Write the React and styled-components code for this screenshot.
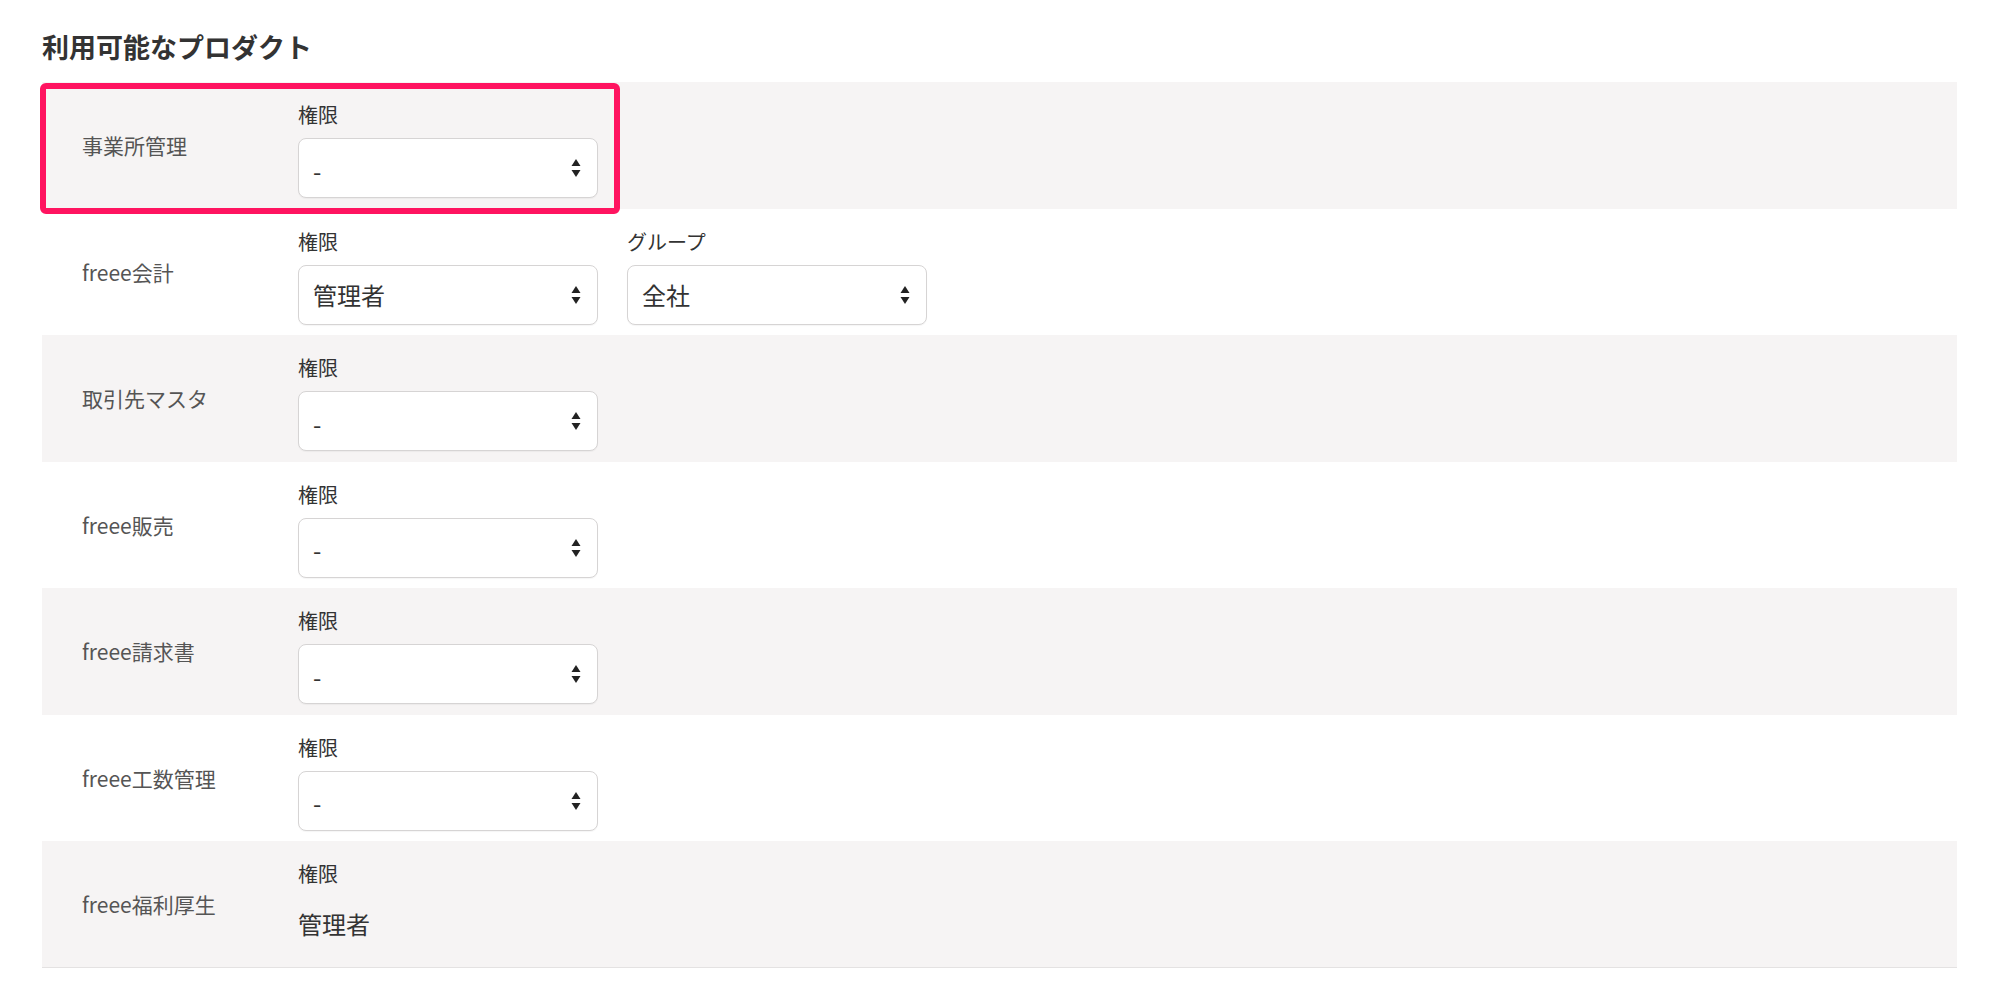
import * as React from 'react';
import styled, { createGlobalStyle } from 'styled-components';

const GlobalStyle = createGlobalStyle`
  html, body {
    margin: 0;
    padding: 0;
    background: #fff;
  }
  body {
    font-family: "Noto Sans CJK JP", "Noto Sans", sans-serif;
    color: #333;
  }
`;

const products = [
  { name: '事業所管理', fields: [{ label: '権限', value: '-' }], highlight: true },
  {
    name: 'freee会計',
    fields: [
      { label: '権限', value: '管理者' },
      { label: 'グループ', value: '全社' },
    ],
  },
  { name: '取引先マスタ', fields: [{ label: '権限', value: '-' }] },
  { name: 'freee販売', fields: [{ label: '権限', value: '-' }] },
  { name: 'freee請求書', fields: [{ label: '権限', value: '-' }] },
  { name: 'freee工数管理', fields: [{ label: '権限', value: '-' }] },
  { name: 'freee福利厚生', fields: [{ label: '権限', value: '管理者', readOnly: true }], last: true },
];

const SelectArrows = () => (
  <svg width="10" height="20" viewBox="0 0 10 20">
    <polygon points="5,1 9.5,8 0.5,8" fill="#222" />
    <polygon points="0.5,12 9.5,12 5,19" fill="#222" />
  </svg>
);

const ProductRow = ({ product, index }) => (
  <Row $striped={index % 2 === 0} $last={product.last}>
    <RowName>{product.name}</RowName>
    <Fields>
      {product.fields.map((field) => (
        <Field key={field.label}>
          <FieldLabel>{field.label}</FieldLabel>
          {field.readOnly ? (
            <StaticValue>{field.value}</StaticValue>
          ) : (
            <Select>
              <SelectValue $dash={field.value === '-'}>{field.value}</SelectValue>
              <SelectArrows />
            </Select>
          )}
        </Field>
      ))}
    </Fields>
    {product.highlight && <Highlight />}
  </Row>
);

const App = () => (
  <Page>
    <GlobalStyle />
    <Title>利用可能なプロダクト</Title>
    <List>
      {products.map((product, i) => (
        <ProductRow key={product.name} product={product} index={i} />
      ))}
    </List>
  </Page>
);

export default App;

const Page = styled.div`
  padding: 27px 42px 0 42px;
`;

const Title = styled.h2`
  margin: 0 0 15px 0;
  font-size: 27px;
  line-height: 40px;
  font-weight: 700;
  color: #333;
`;

const List = styled.div`
  display: flex;
  flex-direction: column;
`;

const Row = styled.div`
  position: relative;
  display: flex;
  flex-direction: row;
  align-items: center;
  height: 126.5px;
  box-sizing: border-box;
  background: ${(p) => (p.$striped ? '#f6f4f4' : '#ffffff')};
  border-bottom: ${(p) => (p.$last ? '1px solid #e4e2e2' : 'none')};
`;

const RowName = styled.div`
  width: 256px;
  flex-shrink: 0;
  box-sizing: border-box;
  padding-left: 40px;
  font-size: 21px;
  color: #555;
`;

const Fields = styled.div`
  display: flex;
  flex-direction: row;
  gap: 29px;
  align-self: stretch;
  padding: 20px 0 10px 0;
`;

const Field = styled.div`
  display: flex;
  flex-direction: column;
  width: 300px;
`;

const FieldLabel = styled.div`
  font-size: 20px;
  line-height: 26px;
  color: #333;
  margin-bottom: 10px;
`;

const Select = styled.div`
  display: flex;
  align-items: center;
  justify-content: space-between;
  height: 60px;
  box-sizing: border-box;
  padding: 0 16px 0 14px;
  background: #fff;
  border: 1px solid #d6d4d4;
  border-radius: 8px;
  box-shadow: 0 1px 1px rgba(0, 0, 0, 0.04);
`;

const SelectValue = styled.span`
  font-size: 24px;
  color: #333;
  padding-top: ${(p) => (p.$dash ? '4px' : '0')};
`;

const StaticValue = styled.div`
  display: flex;
  align-items: center;
  height: 52px;
  font-size: 24px;
  color: #333;
`;

const Highlight = styled.div`
  position: absolute;
  z-index: 5;
  left: -2px;
  top: 1px;
  width: 580px;
  height: 131px;
  box-sizing: border-box;
  border: 6px solid #ff1460;
  border-radius: 6px;
  pointer-events: none;
`;
